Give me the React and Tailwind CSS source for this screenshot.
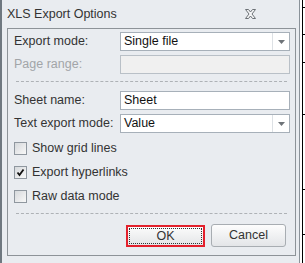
const font = { fontFamily: '"Liberation Sans", Arial, sans-serif' };

const ComboArrow = () => (
  <div className="flex w-[17px] items-center justify-center border-l border-[#dde1e5]">
    <svg width="7" height="4" viewBox="0 0 7 4">
      <path d="M0 0 H7 L3.5 4 Z" fill="#6e7378" />
    </svg>
  </div>
);

const Row = ({ label, disabled, children }) => (
  <div className="flex h-[19px] items-center">
    <div className={`w-[106px] ${disabled ? "text-[#a2a5a8]" : "text-[#333]"}`}>{label}</div>
    {children}
  </div>
);

const Combo = ({ value }) => (
  <div className="flex h-[19px] w-[170px] border border-[#a7b0b9] bg-white">
    <div className="flex-1 pl-[3px] leading-[17px] text-[#111]">{value}</div>
    <ComboArrow />
  </div>
);

const TextBox = ({ value, disabled }) => (
  <div
    className={`h-[19px] w-[170px] border pl-[3px] leading-[17px] text-[#111] ${
      disabled ? "border-[#b9c0c7] bg-[#f0f0f0]" : "border-[#a7b0b9] bg-white"
    }`}
  >
    {value}
  </div>
);

const Check = ({ label, checked }) => (
  <div className="flex h-[13px] items-center gap-[5px]">
    <div className="flex h-[13px] w-[13px] items-center justify-center border border-[#8f979f] bg-gradient-to-br from-[#d6d9dc] to-[#f8f8f8]">
      {checked && (
        <svg width="9" height="9" viewBox="0 0 9 9">
          <path d="M1.5 4.5 L3.5 7 L7.5 1.5" fill="none" stroke="#111" strokeWidth="1.8" />
        </svg>
      )}
    </div>
    <span className="text-[#333]">{label}</span>
  </div>
);

const Separator = () => <div className="mx-[4px] h-0 border-t border-dashed border-[#aeb2b6]" />;

const ticks = ["mt-[7px]", "mt-[26px]", "mt-[27px]", "mt-[51px]", "mt-[74px]", "mt-[44px]"];

export default function App() {
  return (
    <div className="flex h-[263px] w-[305px] bg-white text-[12.5px]" style={font}>
      <div className="flex h-[263px] w-[300px] flex-col border-l-2 border-r border-l-[#6f7880] border-r-[#8a9299] bg-[#e9ecf0]">
        {/* title */}
        <div className="flex h-[28px] items-center pl-[5px] pr-[43px]">
          <span className="flex-1 text-[#333]">XLS Export Options</span>
          <svg width="11" height="10" viewBox="0 0 11 10">
            <path
              d="M0.5 0.5 H3.5 L5.5 3 L7.5 0.5 H10.5 L7 5 L10.5 9.5 H7.5 L5.5 7 L3.5 9.5 H0.5 L4 5 Z"
              fill="#f4f5f6"
              stroke="#6c7176"
            />
          </svg>
        </div>

        {/* group box */}
        <div className="ml-[5px] mr-[3px] flex h-[228px] flex-col border border-[#8d9398] pl-[6px] pr-[4px] pt-[3px]">
          <div className="flex flex-col gap-[4px]">
            <Row label="Export mode:">
              <Combo value="Single file" />
            </Row>
            <Row label="Page range:" disabled>
              <TextBox disabled />
            </Row>
          </div>

          <div className="-ml-[2px] mt-[7px]">
            <Separator />
          </div>

          <div className="mt-[9px] flex flex-col gap-[4px]">
            <Row label="Sheet name:">
              <TextBox value="Sheet" />
            </Row>
            <Row label="Text export mode:">
              <Combo value="Value" />
            </Row>
          </div>

          <div className="mt-[9px] flex flex-col gap-[11px]">
            <Check label="Show grid lines" />
            <Check label="Export hyperlinks" checked />
            <Check label="Raw data mode" />
          </div>

          <div className="-ml-[2px] mt-[10px]">
            <Separator />
          </div>

          <div className="mt-[11px] flex justify-end gap-[6px] pr-[5px]">
            <button className="flex h-[22px] w-[79px] items-center justify-center border-2 border-[#e3202c] bg-gradient-to-b from-[#fbfbfb] to-[#e4e6e8] p-[1px]">
              <span className="flex h-full w-full items-center justify-center border border-dotted border-[#333] text-[#333]">
                OK
              </span>
            </button>
            <button className="h-[23px] w-[75px] -translate-y-[1px] rounded-[3px] border border-[#a8adb2] bg-gradient-to-b from-[#fdfdfd] to-[#e3e5e8] text-[#333]">
              Cancel
            </button>
          </div>
        </div>
      </div>

      {/* background edge */}
      <div className="ml-[2px] flex h-[263px] w-[3px] flex-col border-l border-black">
        {ticks.map((t, i) => (
          <div key={i} className={`${t} h-px w-[2px] bg-black`} />
        ))}
      </div>
    </div>
  );
}
